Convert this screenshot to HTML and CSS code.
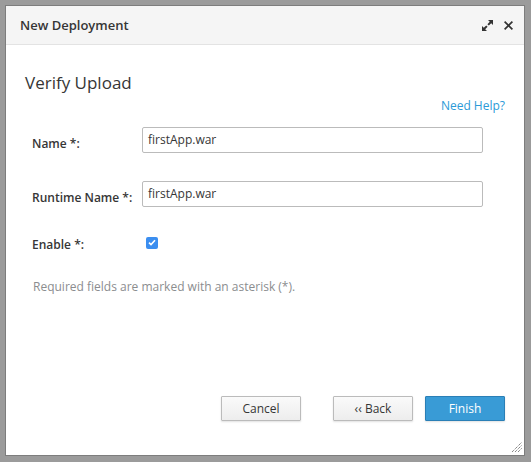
FILE: index.html
```html
<!DOCTYPE html>
<html>
<head>
<meta charset="utf-8">
<link rel="stylesheet" href="styles.css">
</head>
<body>
<div class="backdrop">
  <div class="dialog">
    <div class="header">
      <span class="title">New Deployment</span>
      <span class="tools">
        <svg class="icon" width="11" height="11" viewBox="0 0 11 11"><path d="M6 0h5v5l-1.8-1.8-2.4 2.4-1.4-1.4 2.4-2.4z M5 11H0V6l1.8 1.8 2.4-2.4 1.4 1.4-2.4 2.4z" fill="#333"/></svg>
        <svg class="icon" width="9" height="9" viewBox="0 0 9 9"><path d="M1.2 0 4.5 3.3 7.8 0 9 1.2 5.7 4.5 9 7.8 7.8 9 4.5 5.7 1.2 9 0 7.8 3.3 4.5 0 1.2z" fill="#333"/></svg>
      </span>
    </div>
    <div class="body">
      <h2 class="heading">Verify Upload</h2>
      <div class="help"><a>Need Help?</a></div>
      <div class="form">
        <div class="row">
          <label class="label">Name *:</label>
          <div class="input">firstApp.war</div>
        </div>
        <div class="row">
          <label class="label">Runtime Name *:</label>
          <div class="input">firstApp.war</div>
        </div>
        <div class="row check-row">
          <label class="label">Enable *:</label>
          <span class="checkbox"><svg width="8" height="7" viewBox="0 0 8 7"><path d="M1 3.6 3 5.6 7 1.2" fill="none" stroke="#fff" stroke-width="1.6"/></svg></span>
        </div>
      </div>
      <p class="note">Required fields are marked with an asterisk (*).</p>
    </div>
    <div class="footer">
      <button class="btn">Cancel</button>
      <button class="btn back">‹‹ Back</button>
      <button class="btn primary">Finish</button>
    </div>
    <svg class="grip" width="11" height="11" viewBox="0 0 11 11"><path d="M1 11 11 1 M4 11 11 4 M7 11 11 7" stroke="#555" stroke-width="1" stroke-dasharray="1 1"/></svg>
  </div>
</div>
</body>
</html>
```
FILE: styles.css
```css
* { box-sizing: border-box; }
html, body { margin: 0; padding: 0; }
body {
  width: 531px;
  height: 462px;
  background: #9b9b9b;
  font-family: "Open Sans", "DejaVu Sans", sans-serif;
  color: #363636;
  overflow: hidden;
}
.backdrop {
  padding: 5px 0 0 5px;
}
.dialog {
  position: relative;
  width: 520px;
  height: 451px;
  background: #fff;
  border: 1px solid #7d7d7d;
  display: flex;
  flex-direction: column;
}
.header {
  height: 39px;
  background: #f5f5f5;
  border-bottom: 1px solid #e3e3e3;
  display: flex;
  align-items: center;
  justify-content: space-between;
  padding: 0 11px 0 14px;
}
.title {
  font-size: 13px;
  font-weight: 600;
  color: #363636;
}
.tools {
  display: flex;
  align-items: center;
  gap: 11px;
}
.icon { display: block; }
.body {
  padding: 0 19px 0 19px;
}
.heading {
  margin: 26px 0 0 0;
  font-size: 17px;
  font-weight: 400;
  line-height: 24px;
  color: #363636;
}
.help {
  text-align: right;
  font-size: 12px;
  line-height: 16px;
  margin-top: 3px;
}
.help a { color: #2b9ad7; }
.form {
  margin-top: 13px;
  display: flex;
  flex-direction: column;
  gap: 28px;
}
.row {
  display: flex;
  align-items: center;
}
.label {
  width: 117px;
  padding-left: 7px;
  font-size: 12px;
  font-weight: 600;
  color: #363636;
  padding-top: 6px;
}
.input {
  width: 341px;
  height: 26px;
  border: 1px solid #bbb;
  border-radius: 2px;
  font-size: 12px;
  line-height: 24px;
  padding: 0 5px;
  color: #363636;
}
.check-row { margin-top: -3px; }
.check-row .label { padding-top: 4px; }
.checkbox {
  margin-left: 4px;
  width: 12px;
  height: 12px;
  border-radius: 2px;
  background: #3b8ef0;
  display: flex;
  align-items: center;
  justify-content: center;
}
.note {
  margin: 25px 0 0 8px;
  font-size: 12px;
  color: #8b8d8f;
}
.footer {
  margin-top: auto;
  display: flex;
  justify-content: flex-end;
  padding: 0 19px 34px 0;
}
.btn {
  width: 80px;
  height: 25px;
  font-family: "Open Sans", "DejaVu Sans", sans-serif;
  font-size: 12px;
  color: #363636;
  background: linear-gradient(#fafafa, #ededed);
  border: 1px solid #bbb;
  border-radius: 1px;
  box-shadow: 0 1px 2px rgba(0,0,0,0.12);
  padding: 0;
  margin-left: 12px;
}
.btn.back { margin-left: 32px; }
.primary {
  background: #399bd6;
  border-color: #2a7fb6;
  color: #fff;
}
.grip {
  position: absolute;
  right: 2px;
  bottom: 3px;
}
```
